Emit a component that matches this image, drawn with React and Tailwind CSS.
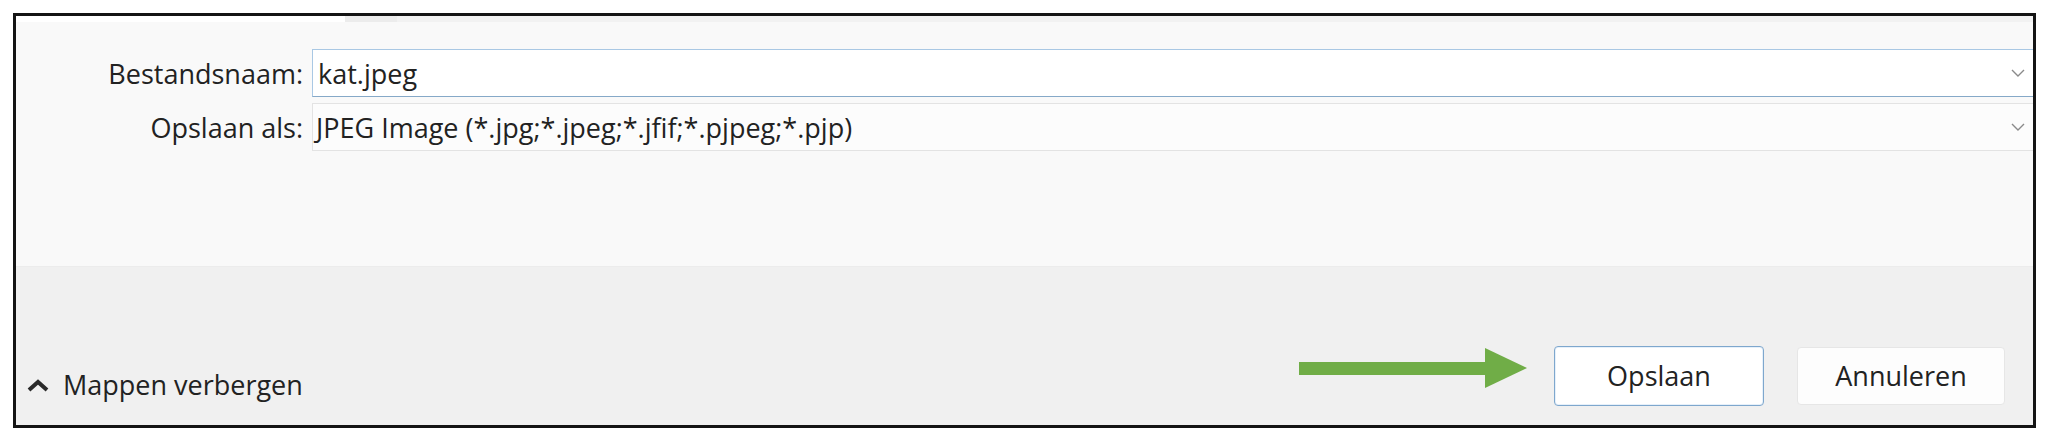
import React from 'react';

const font = { fontFamily: '"Open Sans", "Noto Sans", sans-serif' };

const ChevronDown = () => (
  <svg width="14" height="8" viewBox="0 0 14 8" fill="none">
    <path d="M1 1l6 6 6-6" stroke="#8a8a8a" strokeWidth="1.4" />
  </svg>
);

const Field = ({ label, value, focused }) => (
  <>
    <div className="h-[48px] flex items-center justify-end text-[27px] text-[#222]">{label}</div>
    <div
      className={
        focused
          ? 'h-[48px] flex items-center justify-between pl-[5px] pr-[8px] bg-white border border-[#a9c8e4] border-b-[#86a9c8] border-r-0 text-[27px] text-[#222]'
          : 'h-[48px] flex items-center justify-between pl-[3px] pr-[8px] bg-[#fcfcfc] border border-[#e3e3e3] border-r-0 text-[27px] text-[#222]'
      }
    >
      <span>{value}</span>
      <ChevronDown />
    </div>
  </>
);

export default function App() {
  return (
    <div className="w-[2055px] h-[436px] bg-white pt-[13px] pl-[13px]" style={font}>
      <div className="w-[2023px] h-[415px] border-[3px] border-[#141414] flex flex-col">
        <div className="h-[250px] bg-[#f9f9f9]">
          <div className="h-[6px] flex">
            <div className="w-[329px] bg-white" />
            <div className="w-[52px] bg-[#ececec]" />
            <div className="flex-1 bg-[#f2f2f2]" />
          </div>
          <div className="mt-[27px] grid grid-cols-[287px_1fr] gap-x-[9px] gap-y-[6px] leading-none">
            <Field label="Bestandsnaam:" value="kat.jpeg" focused />
            <Field label="Opslaan als:" value="JPEG Image (*.jpg;*.jpeg;*.jfif;*.pjpeg;*.pjp)" />
          </div>
        </div>
        <div className="flex-1 bg-[#f0f0f0] border-t border-[#ececec] flex items-end justify-between pb-[19px] pl-[10px] pr-[28px]">
          <div className="flex items-center gap-[13px] mb-[1px] text-[27px] text-[#222]">
            <svg width="24" height="16" viewBox="0 0 24 16" fill="none">
              <path d="M3 13l9-8 9 8" stroke="#2a2a2a" strokeWidth="4" />
            </svg>
            <span>Mappen verbergen</span>
          </div>
          <div className="flex items-center">
            <svg width="228" height="40" viewBox="0 0 228 40" className="mb-[16px] mr-[27px]">
              <rect x="0" y="14" width="188" height="13" fill="#70ad47" />
              <polygon points="186,0 228,20 186,40" fill="#70ad47" />
            </svg>
            <button className="w-[210px] h-[60px] bg-white border border-[#7ea7cd] rounded-[4px] text-[27px] text-[#222] shadow-[inset_0_0_0_1px_#e6f0fa]">
              Opslaan
            </button>
            <button className="ml-[33px] w-[208px] h-[58px] bg-[#fdfdfd] border border-[#e6e6e6] rounded-[4px] text-[27px] text-[#222]">
              Annuleren
            </button>
          </div>
        </div>
      </div>
    </div>
  );
}
